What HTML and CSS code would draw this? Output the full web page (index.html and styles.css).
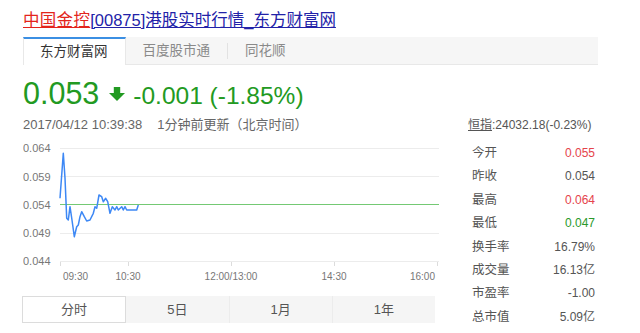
FILE: index.html
```html
<!DOCTYPE html>
<html lang="zh-CN">
<head>
<meta charset="utf-8">
<title>中国金控[00875]港股实时行情_东方财富网</title>
<link rel="stylesheet" href="styles.css">
</head>
<body>
<div class="page">
  <h1 class="title"><a class="red" href="#">中国金控</a><a class="blue" href="#">[00875]港股实时行情_东方财富网</a></h1>
  <div class="tabs">
    <span class="tab active">东方财富网</span>
    <span class="tab">百度股市通</span>
    <span class="divider"></span>
    <span class="tab">同花顺</span>
  </div>
  <div class="quote">
    <span class="price">0.053</span><svg class="arrow" width="16" height="14" viewBox="0 0 16 14"><path d="M4.8 0H11.2V6H16L8 14L0 6H4.8Z" fill="#229a22"/></svg><span class="change">-0.001 (-1.85%)</span>
  </div>
  <div class="main">
    <div class="left">
      <div class="time">2017/04/12 10:39:38<span class="ago">1分钟前更新（北京时间）</span></div>
      <svg class="chart" width="420" height="150" viewBox="0 0 420 150">
        <g class="grid">
          <line x1="37" x2="416" y1="12.5" y2="12.5"/>
          <line x1="37" x2="416" y1="40.5" y2="40.5"/>
          <line x1="37" x2="416" y1="97.5" y2="97.5"/>
          <line x1="37" x2="416" y1="125.5" y2="125.5"/>
        </g>
        <g class="ticks">
          <line x1="37.5" x2="37.5" y1="126" y2="130"/>
          <line x1="105.5" x2="105.5" y1="126" y2="130"/>
          <line x1="208.5" x2="208.5" y1="126" y2="130"/>
          <line x1="311.5" x2="311.5" y1="126" y2="130"/>
          <line x1="414.5" x2="414.5" y1="126" y2="130"/>
        </g>
        <line class="prev" x1="37" x2="416" y1="68.5" y2="68.5"/>
        <polyline class="line" points="37,62.3 40.3,17.3 42,42 43.7,82.3 45.3,84 47,70.7 48.7,82 51.3,100.7 53.7,90.7 55.3,89 57,80.7 58.7,75.7 61.3,80.7 63.7,85 67,84 70.3,77.3 72,70.7 73.7,72.3 76,59 78.7,60.7 80.3,65.7 82.7,62.3 84.7,65.7 87,77.3 89.3,70.7 92,74 93.7,70.7 95.3,74 98.7,70.7 100.3,74 102,70.7 103.7,74 113.7,74 115.3,69"/>
        <g class="ylab">
          <text x="0" y="12">0.064</text>
          <text x="0" y="41">0.059</text>
          <text x="0" y="69">0.054</text>
          <text x="0" y="97">0.049</text>
          <text x="0" y="125">0.044</text>
        </g>
        <g class="xlab">
          <text x="40" y="140" text-anchor="start">09:30</text>
          <text x="105" y="140" text-anchor="middle">10:30</text>
          <text x="208" y="140" text-anchor="middle">12:00/13:00</text>
          <text x="311" y="140" text-anchor="middle">14:30</text>
          <text x="412" y="140" text-anchor="end">16:00</text>
        </g>
      </svg>
      <div class="periods">
        <span class="period active">分时</span>
        <span class="period">5日</span>
        <span class="period">1月</span>
        <span class="period">1年</span>
      </div>
    </div>
    <div class="right">
      <div class="hsi"><u>恒指</u>:24032.18(-0.23%)</div>
      <div class="stats">
        <div class="row"><span class="k">今开</span><span class="v up">0.055</span></div>
        <div class="row"><span class="k">昨收</span><span class="v">0.054</span></div>
        <div class="row"><span class="k">最高</span><span class="v up">0.064</span></div>
        <div class="row"><span class="k">最低</span><span class="v down">0.047</span></div>
        <div class="row"><span class="k">换手率</span><span class="v">16.79%</span></div>
        <div class="row"><span class="k">成交量</span><span class="v">16.13亿</span></div>
        <div class="row"><span class="k">市盈率</span><span class="v">-1.00</span></div>
        <div class="row"><span class="k">总市值</span><span class="v">5.09亿</span></div>
      </div>
    </div>
  </div>
</div>
</body>
</html>
```

FILE: styles.css
```css
html, body {
  margin: 0;
  background: #fff;
  font-family: "Liberation Sans", "Noto Sans CJK SC", sans-serif;
}

.page {
  padding: 10px 0 0 23px;
  width: 575px;
}

.title {
  margin: 0;
  font-size: 16.5px;
  line-height: 20px;
  font-weight: normal;
  white-space: nowrap;
}

.title a {
  text-decoration: underline;
}

.title .red {
  color: #e3241b;
  letter-spacing: 0.3px;
}

.title .blue {
  color: #2222a8;
}

.tabs {
  margin-top: 7px;
  display: flex;
  align-items: stretch;
  height: 27px;
  background: #f6f6f6;
  border-bottom: 1px solid #e8e8e8;
}

.tab {
  padding: 0 17px;
  font-size: 13.5px;
  line-height: 27px;
  color: #8a8a8a;
}

.tab.active {
  background: #fff;
  color: #333;
  border-top: 2px solid #3b8fe3;
  border-left: 1px solid #e8e8e8;
  border-right: 1px solid #e8e8e8;
  line-height: 25px;
  margin-bottom: -1px;
  padding: 0 17px 1px 16px;
}

.divider {
  align-self: center;
  width: 1px;
  height: 16px;
  background: #e2e2e2;
}

.quote {
  margin-top: 10px;
  height: 36px;
  line-height: 36px;
  font-size: 30px;
  color: #229a22;
  white-space: nowrap;
}

.price {
  font-size: 30.5px;
}

.arrow {
  margin: 0 8px 0 10px;
  vertical-align: 3px;
}

.change {
  font-size: 24.5px;
  line-height: 30px;
}

.main {
  margin-top: 5px;
  display: grid;
  grid-template-columns: 445px 130px;
}

.time {
  font-size: 13px;
  line-height: 18px;
  color: #666;
  white-space: nowrap;
}

.time .ago {
  margin-left: 15px;
}

.chart {
  display: block;
  margin-top: 2px;
}

.chart .grid line {
  stroke: #ececec;
  stroke-width: 1;
}

.chart .ticks line {
  stroke: #dcdcdc;
  stroke-width: 1;
}

.chart .prev {
  stroke: #74c974;
  stroke-width: 1.2;
}

.chart .line {
  fill: none;
  stroke: #3d88f5;
  stroke-width: 1.5;
  stroke-linejoin: round;
}

.chart text {
  font-family: "Liberation Sans", sans-serif;
  fill: #777;
}

.chart .ylab text {
  font-size: 11px;
  dominant-baseline: central;
}

.chart .xlab text {
  font-size: 10px;
  dominant-baseline: central;
}

.periods {
  display: flex;
  margin: 10px 0 0 -1px;
  width: 413px;
  height: 27px;
  background: #f5f5f5;
}

.period {
  flex: 1;
  text-align: center;
  font-size: 13px;
  line-height: 27px;
  color: #555;
}

.period + .period + .period {
  border-left: 1px solid #ececec;
}

.period.active {
  background: #fff;
  border: 1px solid #dcdcdc;
  line-height: 25px;
}

.hsi {
  font-size: 12px;
  line-height: 18px;
  color: #555;
  white-space: nowrap;
}

.hsi u {
  text-decoration: underline;
}

.stats {
  margin: 8px 0 0 4px;
  width: 123px;
}

.row {
  display: flex;
  justify-content: space-between;
  line-height: 23.4px;
  height: 23.4px;
}

.row .k {
  font-size: 12.5px;
  color: #555;
}

.row .v {
  font-size: 12px;
  color: #555;
}

.row .v.up {
  color: #e5434b;
}

.row .v.down {
  color: #2a992a;
}
```
